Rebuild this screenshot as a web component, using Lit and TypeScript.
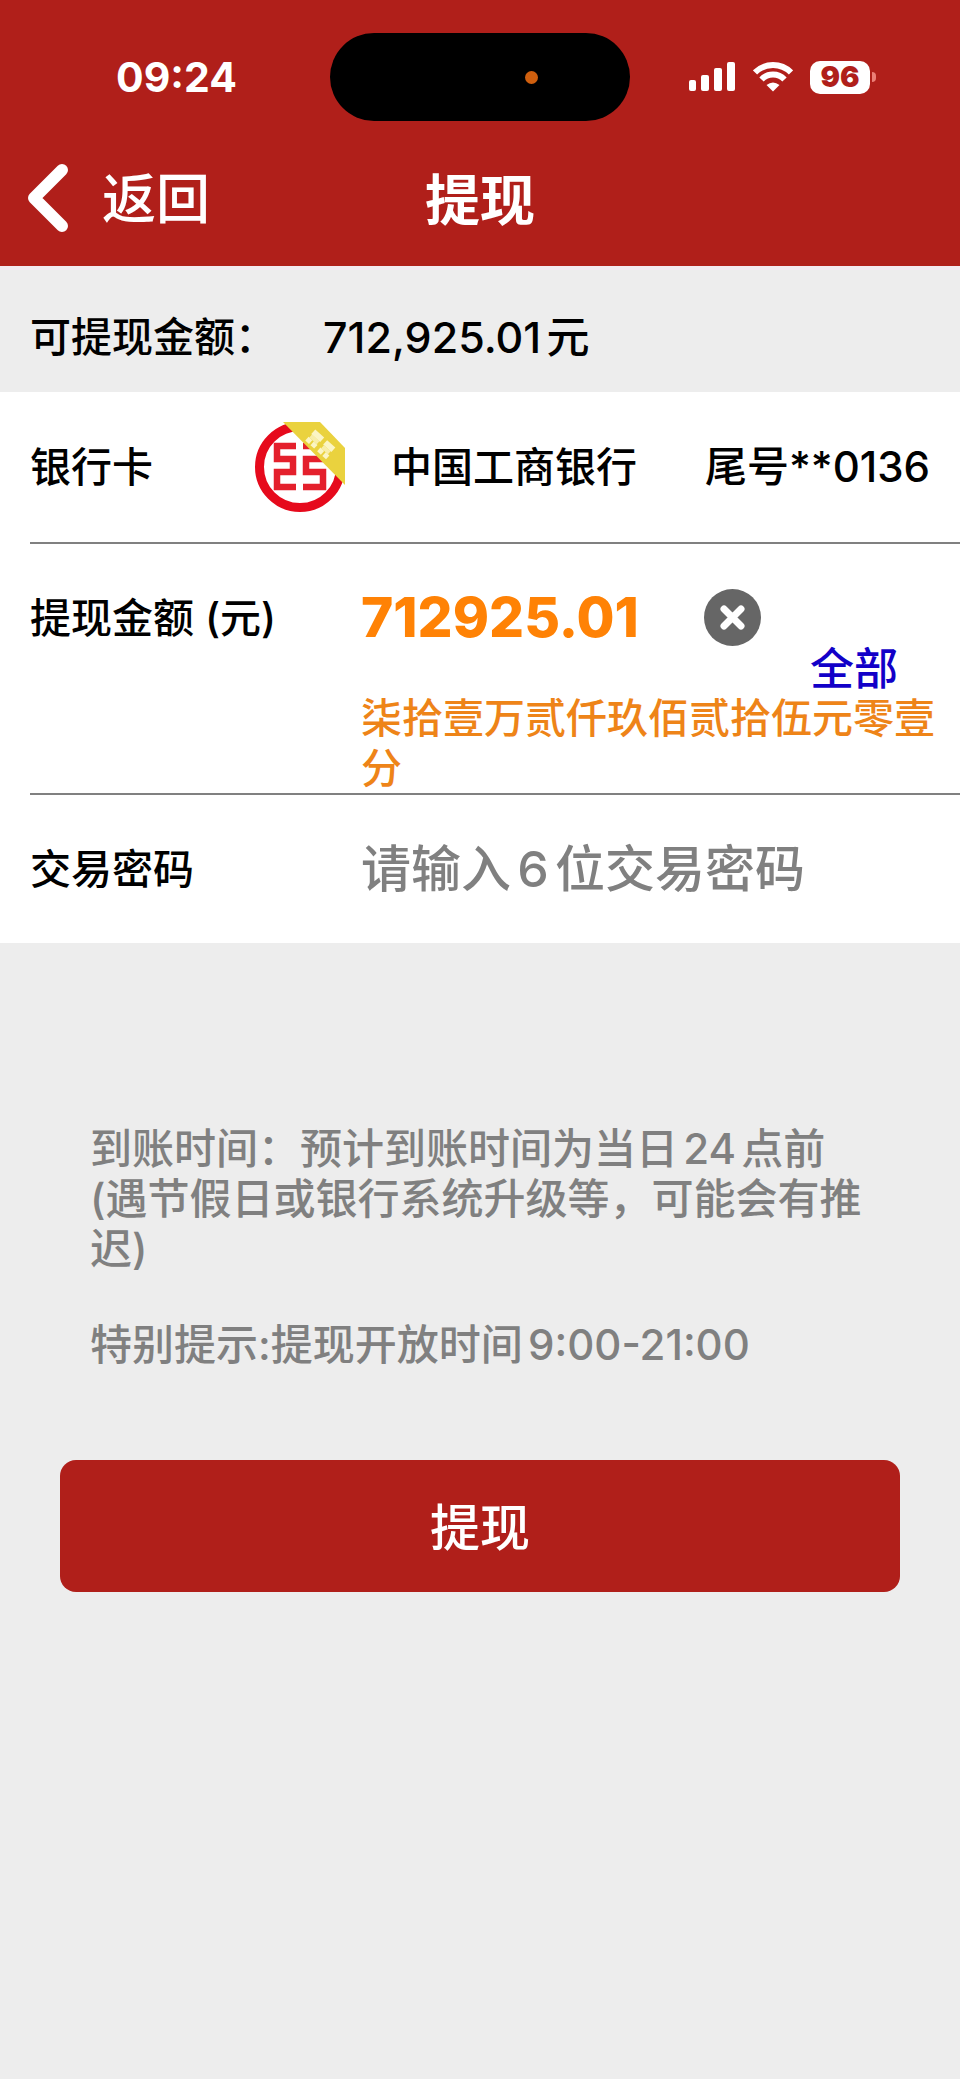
import { LitElement, html, css } from "lit";
import { customElement, state } from "lit/decorators.js";

@customElement("status-bar")
export class StatusBar extends LitElement {
  static styles = css`
    :host {
      display: grid;
      grid-template-columns: 1fr auto 1fr;
      align-items: center;
      padding: 33px 0 9px;
      color: #fff;
    }
    .time {
      font-size: 41px;
      line-height: 50px;
      font-weight: 700;
      padding-left: 116px;
    }
    .island {
      display: flex;
      align-items: center;
      justify-content: flex-end;
      box-sizing: border-box;
      width: 300px;
      height: 88px;
      padding-right: 92px;
      border-radius: 44px;
      background: #000;
    }
    .dot {
      width: 13px;
      height: 13px;
      border-radius: 50%;
      background: #cf5f0e;
    }
    .icons {
      display: flex;
      align-items: center;
      padding-left: 59px;
    }
    .wifi {
      margin: 0 17px 0 18px;
    }
    .battery {
      display: flex;
      align-items: center;
      justify-content: center;
      width: 60px;
      height: 33px;
      border-radius: 10px;
      background: #fff;
      color: #b01f1a;
      font-size: 29px;
      line-height: 32px;
      font-weight: 900;
    }
    .nub {
      width: 4px;
      height: 10px;
      margin-left: 2px;
      border-radius: 0 5px 5px 0;
      background: #ec7f77;
    }
  `;

  render() {
    return html`
      <span class="time">09:24</span>
      <span class="island"><span class="dot"></span></span>
      <span class="icons">
        <svg width="46" height="30" viewBox="0 0 46 30" fill="#fff" aria-hidden="true">
          <rect x="0" y="18" width="7" height="11" rx="2" />
          <rect x="12" y="13" width="8" height="16" rx="2" />
          <rect x="25" y="6" width="8" height="23" rx="2" />
          <rect x="38" y="0" width="8" height="29" rx="2" />
        </svg>
        <svg class="wifi" width="40" height="30" viewBox="0 0 40 30" aria-hidden="true">
          <g fill="none" stroke="#fff" stroke-width="6">
            <path d="M2 10.500A25.500 25.500 0 0 1 38 10.500" />
            <path d="M8.500 17.500A16 16 0 0 1 31.500 17.500" />
          </g>
          <path d="M20 29.500L13.500 23Q20 18 26.500 23Z" fill="#fff" />
        </svg>
        <span class="battery">96</span><span class="nub"></span>
      </span>
    `;
  }
}

@customElement("bank-logo")
export class BankLogo extends LitElement {
  static styles = css`
    :host,
    svg {
      display: block;
    }
  `;

  render() {
    return html`
      <svg width="90" height="90" viewBox="0 0 90 90" role="img" aria-label="中国工商银行">
        <circle cx="45" cy="45" r="40.500" fill="#fff" stroke="#e60a1c" stroke-width="9" />
        <g fill="none" stroke="#e4202c" stroke-width="6.500">
          <path d="M41 24H22V37H38V50H22V65H41" />
          <path d="M48 24H68V37H51V50H68V65H48" />
        </g>
        <path d="M28 0H65L90 26V63Z" fill="#ead23e" />
        <g fill="#fbf5c4" transform="translate(66 22) rotate(42)">
          <rect x="-14" y="-7" width="12" height="6" />
          <rect x="-13" y="-1" width="10" height="4" opacity=".8" />
          <rect x="-14" y="3" width="5" height="5" />
          <rect x="-7" y="3" width="5" height="5" />
          <rect x="2" y="-7" width="11" height="6" />
          <rect x="3" y="-1" width="9" height="4" opacity=".8" />
          <rect x="2" y="3" width="5" height="5" />
          <rect x="9" y="3" width="5" height="5" />
        </g>
      </svg>
    `;
  }
}

@customElement("app-root")
export class AppRoot extends LitElement {
  static styles = css`
    :host {
      display: block;
      min-height: 100vh;
      background: #ededed;
      color: #000;
      font-family: Inter, "Noto Sans CJK SC", sans-serif;
      font-size: 41px;
      line-height: 50px;
      font-weight: 500;
      text-autospace: normal;
    }
    button,
    input {
      font: inherit;
      color: inherit;
      background: none;
      border: 0;
      padding: 0;
      margin: 0;
      min-width: 0;
      text-autospace: inherit;
    }
    .header {
      background: #b01f1a;
      color: #fff;
    }
    .nav {
      display: grid;
      grid-template-columns: 1fr auto 1fr;
      align-items: center;
      height: 136px;
    }
    .back {
      display: flex;
      align-items: center;
      gap: 34px;
      padding-left: 28px;
      font-size: 54px;
      line-height: 64px;
    }
    .back span,
    .title {
      padding-top: 3px;
    }
    .title {
      margin: 0;
      font-size: 55px;
      line-height: 64px;
      font-weight: 700;
    }
    .available {
      display: flex;
      align-items: center;
      gap: 47px;
      box-sizing: border-box;
      height: 126px;
      padding: 12px 0 0 30px;
      border-top: 4px solid #f3eaf0;
    }
    .balance {
      font-size: 43px;
    }
    .form {
      background: #fff;
      padding-left: 30px;
    }
    .row {
      display: flex;
      border-bottom: 2px solid #808080;
    }
    .label {
      flex: none;
    }
    .card {
      height: 150px;
      align-items: center;
    }
    .card .label {
      width: 225px;
    }
    .bank {
      flex: 1;
      padding-left: 46px;
    }
    .tail {
      padding-right: 30px;
      font-size: 42px;
    }
    .amount .label,
    .password .label {
      width: 331px;
    }
    .amount {
      padding-top: 45px;
    }
    .amount .label {
      line-height: 58px;
    }
    .value {
      flex: 1;
      min-width: 0;
      display: flex;
      flex-direction: column;
    }
    .entry {
      display: flex;
      align-items: center;
      height: 56px;
    }
    .sum {
      width: 343px;
      font-size: 55px;
      line-height: 56px;
      font-weight: 800;
      color: #ff8205;
    }
    .clear,
    .clear svg {
      display: block;
    }
    .all {
      align-self: flex-end;
      margin-right: 62px;
      font-size: 44px;
      line-height: 48px;
      color: #1200c8;
      text-decoration: none;
    }
    .words {
      color: #ee8418;
    }
    .password {
      height: 148px;
      align-items: center;
      border-bottom: 0;
    }
    .code {
      flex: 1;
      font-size: 50px;
      line-height: 60px;
    }
    .code::placeholder {
      color: #808080;
      opacity: 1;
    }
    .notes {
      padding: 181px 90px 90px;
      color: #808080;
      font-size: 42px;
    }
    .notes p {
      margin: 0 0 46px;
    }
    .notes p:last-child {
      margin: 0;
    }
    .actions {
      padding: 0 60px;
    }
    .submit {
      width: 100%;
      height: 132px;
      padding-top: 4px;
      border-radius: 16px;
      background: #b01f1a;
      color: #fff;
      font-size: 50px;
      line-height: 60px;
    }
  `;

  @state() private sum = "712925.01";

  private get words() {
    return this.sum ? "柒拾壹万贰仟玖佰贰拾伍元零壹分" : "";
  }

  private fillAll(e: Event) {
    e.preventDefault();
    this.sum = "712925.01";
  }

  render() {
    return html`
      <header class="header">
        <status-bar></status-bar>
        <nav class="nav">
          <button class="back" type="button">
            <svg width="40" height="68" viewBox="0 0 40 68" aria-hidden="true">
              <path d="M34 6L6 34L34 62" fill="none" stroke="#fff" stroke-width="12" stroke-linecap="round" stroke-linejoin="round" />
            </svg>
            <span>返回</span>
          </button>
          <h1 class="title">提现</h1>
        </nav>
      </header>

      <div class="available"><span>可提现金额：</span><span class="balance">712,925.01元</span></div>

      <section class="form">
        <div class="row card">
          <span class="label">银行卡</span>
          <bank-logo></bank-logo>
          <span class="bank">中国工商银行</span>
          <span class="tail">尾号**0136</span>
        </div>
        <div class="row amount">
          <label class="label" for="sum">提现金额 (元)</label>
          <div class="value">
            <div class="entry">
              <input
                class="sum"
                id="sum"
                inputmode="decimal"
                .value=${this.sum}
                @input=${(e: Event) => (this.sum = (e.target as HTMLInputElement).value)}
              />
              <button class="clear" type="button" aria-label="清除" @click=${() => (this.sum = "")}>
                <svg width="57" height="57" viewBox="0 0 57 57" aria-hidden="true">
                  <circle cx="28.500" cy="28.500" r="28.500" fill="#666" />
                  <path d="M20 20L37 37M37 20L20 37" stroke="#fff" stroke-width="7" stroke-linecap="round" />
                </svg>
              </button>
            </div>
            <a class="all" href="#all" @click=${this.fillAll}>全部</a>
            <div class="words">${this.words}</div>
          </div>
        </div>
        <div class="row password">
          <label class="label" for="code">交易密码</label>
          <input class="code" id="code" type="text" inputmode="numeric" maxlength="6" placeholder="请输入6位交易密码" />
        </div>
      </section>

      <section class="notes">
        <p>到账时间：预计到账时间为当日24点前(遇节假日或银行系统升级等，可能会有推迟)</p>
        <p>特别提示:提现开放时间9:00-21:00</p>
      </section>

      <div class="actions"><button class="submit" type="button">提现</button></div>
    `;
  }
}
